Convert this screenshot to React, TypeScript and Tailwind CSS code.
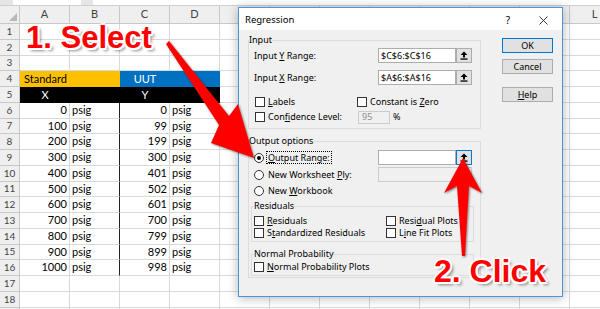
import React from "react";

const COLS = ["A", "B", "C", "D", "E", "F", "G", "H", "I", "J", "K", "L"];
// columns E..K sit under the dialog, their letters are never seen
const HIDDEN = ["E", "F", "G", "H", "I", "J", "K"];
const XV = [0, 100, 200, 300, 400, 500, 600, 700, 800, 900, 1000];
const YV = [0, 99, 199, 300, 401, 502, 601, 700, 799, 899, 998];

function RowHead({ n }: { n?: number }) {
  return (
    <div className="w-[20px] shrink-0 flex items-center justify-center bg-[#efefef] border-r border-b border-[#c8c8c8] text-[10px] text-[#444]">
      {n}
    </div>
  );
}

function Blanks({ count }: { count: number }) {
  return (
    <>
      {Array.from({ length: count }).map((_, i) => (
        <div key={i} className="w-[50px] shrink-0 border-r border-b border-[#d9d9d9]" />
      ))}
    </>
  );
}

function SheetRow({ n, children }: { n?: number; children: React.ReactNode }) {
  return (
    <div className="flex h-[15.75px]">
      <RowHead n={n} />
      {children}
    </div>
  );
}

function Sheet() {
  return (
    <div className="w-[600px] h-[309px] overflow-hidden bg-white font-['Lato',sans-serif] text-[11px] text-black">
      <div className="h-[6px] flex bg-[#e6e6e6] border-b border-[#cfcfcf]">
        <div className="ml-[13px] w-[68px] bg-white" />
        <div className="ml-[12px] flex-1 bg-white" />
      </div>
      <div className="flex h-[18px]">
        <div className="w-[20px] shrink-0 flex items-end justify-end pr-[2px] pb-[2px] bg-[#efefef] border-r border-b border-[#c8c8c8]">
          <svg width="8" height="8" viewBox="0 0 8 8">
            <polygon points="8,0 8,8 0,8" fill="#b8b8b8" />
          </svg>
        </div>
        {COLS.map((c) => (
          <div
            key={c}
            className="w-[50px] shrink-0 flex items-center justify-center bg-[#efefef] border-r border-b border-[#c8c8c8] text-[#444]"
          >
            {HIDDEN.includes(c) ? "" : c}
          </div>
        ))}
      </div>
      {[1, 2, 3].map((n) => (
        <SheetRow key={n} n={n}>
          <Blanks count={12} />
        </SheetRow>
      ))}
      <SheetRow n={4}>
        <div className="w-[100px] shrink-0 bg-[#ffc000] flex items-center pl-[4px]">Standard</div>
        <div className="w-[100px] shrink-0 bg-[#0070c0] flex items-center">
          <span className="w-[50px] text-center text-white">UUT</span>
        </div>
        <Blanks count={8} />
      </SheetRow>
      <SheetRow n={5}>
        <div className="w-[200px] shrink-0 bg-black flex items-center text-white">
          <span className="w-[50px] text-center">X</span>
          <span className="w-[50px]" />
          <span className="w-[50px] text-center">Y</span>
        </div>
        <Blanks count={8} />
      </SheetRow>
      {XV.map((x, i) => (
        <SheetRow key={i} n={i + 6}>
          <div className="w-[50px] shrink-0 flex items-center justify-end pr-[2px] border-r border-b border-[#d9d9d9]">{x}</div>
          <div className="w-[50px] shrink-0 flex items-center pl-[2px] border-b border-b-[#d9d9d9] border-r border-r-[#222]">psig</div>
          <div className="w-[50px] shrink-0 flex items-center justify-end pr-[2px] border-r border-b border-[#d9d9d9]">{YV[i]}</div>
          <div className="w-[50px] shrink-0 flex items-center pl-[2px] border-r border-b border-[#d9d9d9]">psig</div>
          <Blanks count={8} />
        </SheetRow>
      ))}
      <SheetRow n={17}>
        <Blanks count={12} />
      </SheetRow>
      <SheetRow n={18}>
        <Blanks count={12} />
      </SheetRow>
      <SheetRow>
        <Blanks count={12} />
      </SheetRow>
    </div>
  );
}

function Box() {
  return <span className="w-[10px] h-[10px] shrink-0 border border-[#333] bg-white" />;
}

function Check({ children, className = "" }: { children: React.ReactNode; className?: string }) {
  return (
    <div className={`flex items-center ${className}`}>
      <Box />
      <span className="ml-[3px] whitespace-nowrap">{children}</span>
    </div>
  );
}

function Radio({ on = false }: { on?: boolean }) {
  return (
    <span className="w-[10px] h-[10px] shrink-0 rounded-full border border-[#333] bg-white flex items-center justify-center">
      {on && <span className="w-[4px] h-[4px] rounded-full bg-black" />}
    </span>
  );
}

function TextBox({ value = "" }: { value?: string }) {
  return (
    <div className="w-[78px] h-[15px] shrink-0 flex items-center pl-[2px] bg-white border border-[#adadad] overflow-hidden whitespace-nowrap">
      {value}
    </div>
  );
}

function RefBtn({ focused = false }: { focused?: boolean }) {
  return (
    <div
      className={`w-[16px] h-[15px] shrink-0 flex items-center justify-center bg-[#e1e1e1] border ${
        focused ? "border-[#0078d7]" : "border-[#adadad]"
      }`}
    >
      <svg width="8" height="9" viewBox="0 0 8 9">
        <path d="M4 0.5 L7.5 4 H5 V6.6 H3 V4 H0.5 Z" fill="#000" />
        <rect x="0.5" y="7.4" width="7" height="1.3" fill="#000" />
      </svg>
    </div>
  );
}

function Btn({ children, primary = false, className = "" }: { children: React.ReactNode; primary?: boolean; className?: string }) {
  return (
    <div
      className={`h-[15px] flex items-center justify-center bg-[#e1e1e1] border ${
        primary ? "border-[#0078d7]" : "border-[#adadad]"
      } ${className}`}
    >
      {children}
    </div>
  );
}

function Dialog() {
  return (
    <div className="absolute left-[238px] top-[7px] w-[325px] h-[290px] flex flex-col border border-[#4c96d7] bg-[#f0f0f0] shadow-[0_1px_10px_rgba(0,0,0,0.3)] font-['Noto_Sans',sans-serif] text-[9px] leading-[12px] text-black">
      <div className="h-[22px] shrink-0 flex items-center pl-[6px] pt-[2px] bg-white">
        <span className="text-[9.5px]">Regression</span>
        <span className="ml-auto text-[10px]">?</span>
        <svg className="ml-[29px] mr-[14px]" width="9" height="9" viewBox="0 0 9 9">
          <path d="M0.5 0.5 L8.5 8.5 M8.5 0.5 L0.5 8.5" stroke="#222" strokeWidth="0.9" />
        </svg>
      </div>
      <div className="flex pl-[9px] pt-[4px]">
        <div className="w-[233px] flex flex-col">
          <fieldset className="border border-[#dcdcdc]">
            <legend className="leading-[12px]">Input</legend>
            <div className="flex flex-col pl-[5px] pb-[4px]">
              <div className="flex items-center h-[15px] mt-[2px]">
                <span className="w-[124px]">
                  Input <u>Y</u> Range:
                </span>
                <TextBox value="$C$6:$C$16" />
                <RefBtn />
              </div>
              <div className="flex items-center h-[15px] mt-[7px]">
                <span className="w-[124px]">
                  Input <u>X</u> Range:
                </span>
                <TextBox value="$A$6:$A$16" />
                <RefBtn />
              </div>
              <div className="flex items-center h-[12px] mt-[11px] pl-[1px]">
                <Check className="w-[102px]">
                  <u>L</u>abels
                </Check>
                <Check>
                  Constant is <u>Z</u>ero
                </Check>
              </div>
              <div className="flex items-center h-[14px] mt-[2px] pl-[1px]">
                <Check className="w-[103px]">
                  Con<u>f</u>idence Level:
                </Check>
                <div className="w-[32px] h-[13px] flex items-center pl-[3px] bg-[#f0f0f0] border border-[#cccccc] text-[#8c8c8c]">95</div>
                <span className="ml-[3px]">%</span>
              </div>
            </div>
          </fieldset>
          <fieldset className="border border-[#dcdcdc] mt-[6px]">
            <legend className="leading-[12px]">Output options</legend>
            <div className="flex flex-col pb-[1px]">
              <div className="flex items-center h-[15px] mt-[3px] pl-[5px]">
                <div className="w-[124px] flex items-center">
                  <Radio on />
                  <span className="ml-[2px] px-[1px] border border-dotted border-black leading-[11px]">
                    <u>O</u>utput Range:
                  </span>
                </div>
                <TextBox />
                <RefBtn focused />
              </div>
              <div className="flex items-center h-[15px] mt-[2px] pl-[5px]">
                <div className="w-[124px] flex items-center">
                  <Radio />
                  <span className="ml-[4px]">
                    New Worksheet <u>P</u>ly:
                  </span>
                </div>
                <div className="w-[94px] h-[15px] bg-[#f0f0f0] border border-[#cccccc]" />
              </div>
              <div className="flex items-center h-[12px] mt-[3px] pl-[5px]">
                <Radio />
                <span className="ml-[4px]">
                  New <u>W</u>orkbook
                </span>
              </div>
              <fieldset className="border border-[#dcdcdc] ml-[2px] mr-[6px] mt-[3px]">
                <legend className="leading-[12px] ml-[2px]">Residuals</legend>
                <div className="flex flex-col pl-[2px] pb-[2px]">
                  <div className="flex items-center h-[12px] mt-[3px]">
                    <Check className="w-[132px]">
                      <u>R</u>esiduals
                    </Check>
                    <Check>
                      Resi<u>d</u>ual Plots
                    </Check>
                  </div>
                  <div className="flex items-center h-[12px]">
                    <Check className="w-[132px]">
                      S<u>t</u>andardized Residuals
                    </Check>
                    <Check>
                      L<u>i</u>ne Fit Plots
                    </Check>
                  </div>
                </div>
              </fieldset>
              <fieldset className="border border-[#dcdcdc] ml-[2px] mr-[6px] mt-[6px]">
                <legend className="leading-[12px] ml-[2px]">Normal Probability</legend>
                <div className="flex flex-col pl-[2px] pb-[2px]">
                  <div className="flex items-center h-[12px] mt-[1px]">
                    <Check>
                      <u>N</u>ormal Probability Plots
                    </Check>
                  </div>
                </div>
              </fieldset>
            </div>
          </fieldset>
        </div>
        <div className="ml-[21px] w-[51px] mt-[4px] flex flex-col">
          <Btn primary>OK</Btn>
          <Btn className="mt-[6px]">Cancel</Btn>
          <Btn className="mt-[13px]">
            <u>H</u>elp
          </Btn>
        </div>
      </div>
    </div>
  );
}

function Callouts() {
  return (
    <>
      <svg
        className="absolute left-0 top-0 pointer-events-none [filter:drop-shadow(1px_1px_1px_rgba(0,0,0,0.45))]"
        width="600"
        height="309"
        viewBox="0 0 600 309"
      >
        <polygon points="169,41 229,116 238,104 254,158 211,143 219,125 166,44" fill="#ff0000" />
        <polygon points="463,158 482,193 469,186 465,256 462,256 457,186 444,193" fill="#ff0000" />
      </svg>
      <div className="absolute left-[26px] top-[22px] whitespace-nowrap font-['Liberation_Sans',Arial,sans-serif] font-bold text-[31px] leading-none text-[#ff0000] [text-shadow:2px_0_0_#fff,-2px_0_0_#fff,0_2px_0_#fff,0_-2px_0_#fff,1.5px_1.5px_0_#fff,-1.5px_-1.5px_0_#fff,1.5px_-1.5px_0_#fff,-1.5px_1.5px_0_#fff,3px_3px_3px_rgba(0,0,0,0.45)]">
        1. Select
      </div>
      <div className="absolute left-[434px] top-[255px] whitespace-nowrap font-['Liberation_Sans',Arial,sans-serif] font-bold text-[32px] leading-none text-[#ff0000] [text-shadow:2px_0_0_#fff,-2px_0_0_#fff,0_2px_0_#fff,0_-2px_0_#fff,1.5px_1.5px_0_#fff,-1.5px_-1.5px_0_#fff,1.5px_-1.5px_0_#fff,-1.5px_1.5px_0_#fff,3px_3px_3px_rgba(0,0,0,0.45)]">
        2. Click
      </div>
    </>
  );
}

export default function App() {
  return (
    <div className="relative w-[600px] h-[309px] overflow-hidden">
      <Sheet />
      <Dialog />
      <Callouts />
    </div>
  );
}
